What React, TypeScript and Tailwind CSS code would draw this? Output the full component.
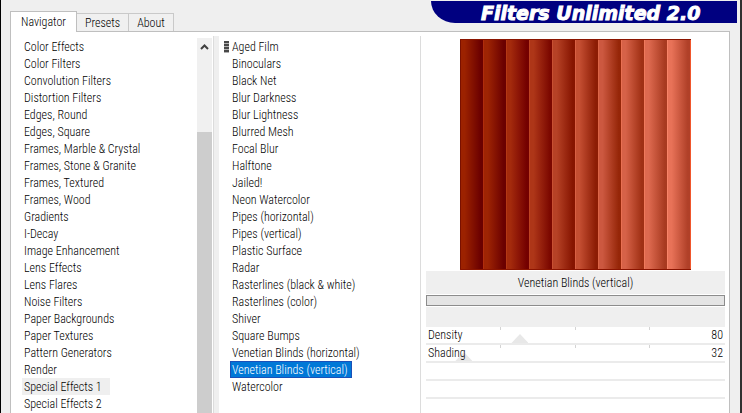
import { useState } from 'react'

const categories = [
  'Color Effects',
  'Color Filters',
  'Convolution Filters',
  'Distortion Filters',
  'Edges, Round',
  'Edges, Square',
  'Frames, Marble & Crystal',
  'Frames, Stone & Granite',
  'Frames, Textured',
  'Frames, Wood',
  'Gradients',
  'I-Decay',
  'Image Enhancement',
  'Lens Effects',
  'Lens Flares',
  'Noise Filters',
  'Paper Backgrounds',
  'Paper Textures',
  'Pattern Generators',
  'Render',
  'Special Effects 1',
  'Special Effects 2',
]

const filters = [
  'Aged Film',
  'Binoculars',
  'Black Net',
  'Blur Darkness',
  'Blur Lightness',
  'Blurred Mesh',
  'Focal Blur',
  'Halftone',
  'Jailed!',
  'Neon Watercolor',
  'Pipes (horizontal)',
  'Pipes (vertical)',
  'Plastic Surface',
  'Radar',
  'Rasterlines (black & white)',
  'Rasterlines (color)',
  'Shiver',
  'Square Bumps',
  'Venetian Blinds (horizontal)',
  'Venetian Blinds (vertical)',
  'Watercolor',
]

// edge highlight, left colour, right colour
const slats = [
  ['#7a1000', '#9c2200', '#6b0000'],
  ['#b02c0c', '#9e2404', '#6b0000'],
  ['#b43814', '#a42a0c', '#740000'],
  ['#be4422', '#ae3618', '#7c0800'],
  ['#c85032', '#b64226', '#861400'],
  ['#d86044', '#c44e32', '#8c1c04'],
  ['#dc6648', '#cc5840', '#962608'],
  ['#e87052', '#d66248', '#a03014'],
  ['#f07a5c', '#de6a50', '#a83a20'],
  ['#f88468', '#e87258', '#b04028'],
]

function FilmIcon() {
  return (
    <svg width="5" height="12" viewBox="0 0 5 12" aria-hidden="true">
      {[0, 3, 6, 9].map((y) => (
        <g key={y}>
          <rect y={y} width="5" height="2" fill="#484848" />
          <rect y={y + 2} width="5" height="1" fill="#b0b0b0" />
        </g>
      ))}
    </svg>
  )
}

function Preview() {
  return (
    <svg viewBox="0 0 231 231" className="mx-auto block w-[231px]" role="img" aria-label="Preview">
      <defs>
        {slats.map(([, from, to], i) => (
          <linearGradient key={i} id={`slat${i}`}>
            <stop offset="0" stopColor={from} />
            <stop offset="0.2" stopColor={from} />
            <stop offset="0.9" stopColor={to} />
          </linearGradient>
        ))}
      </defs>
      {slats.map(([edge], i) => (
        <g key={i}>
          <rect x={i * 23} width="23" height="231" fill={`url(#slat${i})`} />
          <rect x={i * 23} width="1" height="231" fill={edge} />
        </g>
      ))}
      <rect x="230" width="1" height="231" fill="#f0562c" />
      <rect width="231" height="1" fill="#8a1400" />
      <rect y="230" width="231" height="1" fill="#8a1400" />
    </svg>
  )
}

function Tab({ label, active, onClick }: { label: string; active: boolean; onClick: () => void }) {
  return (
    <button
      type="button"
      role="tab"
      aria-selected={active}
      onClick={onClick}
      className={
        active
          ? 'relative -mb-px h-[21px] border border-b-0 border-[#bfbfbf] bg-white px-2.5'
          : 'h-[18px] border border-b-0 border-l-0 border-[#c9c9c9] bg-[#f0f0f0] px-2 pt-px'
      }
    >
      {label}
    </button>
  )
}

function Param({ label, initial }: { label: string; initial: number }) {
  const [value, setValue] = useState(initial)
  const id = label.toLowerCase()

  return (
    <div className="grid h-[18px] border-b-2 border-[#ebebeb] *:[grid-area:1/1]">
      <div className="grid h-[3px] grid-cols-4" aria-hidden="true">
        <span className="border-r border-[#d4d4d4]" />
        <span className="border-r border-[#d4d4d4]" />
        <span className="border-r border-[#d4d4d4]" />
      </div>
      <input
        id={id}
        type="range"
        min={0}
        max={255}
        value={value}
        onChange={(e) => setValue(Number(e.target.value))}
        className="-mx-2 h-[9px] appearance-none self-end bg-transparent [&::-webkit-slider-thumb]:h-[9px] [&::-webkit-slider-thumb]:w-[17px] [&::-webkit-slider-thumb]:appearance-none [&::-webkit-slider-thumb]:bg-[#e8e8e8] [&::-webkit-slider-thumb]:[clip-path:polygon(50%_0,100%_100%,0_100%)]"
      />
      <div className="pointer-events-none relative flex justify-between px-0.5 leading-4">
        <label htmlFor={id}>{label}</label>
        <output htmlFor={id}>{value}</output>
      </div>
    </div>
  )
}

export default function App() {
  const [tab, setTab] = useState('Navigator')
  const [category, setCategory] = useState('Special Effects 1')
  const [filter, setFilter] = useState('Venetian Blinds (vertical)')

  return (
    <div className="flex h-screen flex-col overflow-hidden border-r-2 border-l border-r-[#303030] border-l-black bg-[#efefef] pr-[10px] pl-[9px] font-['Roboto_Condensed','Roboto',sans-serif] text-[12px] leading-4 font-[360] text-black">
      <header className="flex items-start justify-between">
        <div role="tablist" className="flex items-end self-end">
          {['Navigator', 'Presets', 'About'].map((name) => (
            <Tab key={name} label={name} active={tab === name} onClick={() => setTab(name)} />
          ))}
        </div>
        <div className="-mr-[7px] mt-px mb-2 h-[22px] w-[306px] rounded-bl-[24px_22px] bg-[#000080] pl-[50px] font-['DejaVu_Sans',sans-serif] text-[19px] leading-[24px] font-bold whitespace-nowrap text-white italic [-webkit-text-stroke:1px_white]">
          Filters Unlimited 2.0
        </div>
      </header>

      <main className="flex min-h-0 flex-1 border border-b-0 border-[#bfbfbf] bg-white pt-1">
        <ul className="w-[186px] shrink-0 pt-[2px] pl-[11px]">
          {categories.map((name) => (
            <li key={name} className="h-[17px]">
              <button
                type="button"
                onClick={() => setCategory(name)}
                className={
                  name === category
                    ? 'bg-[#efefef] pt-px pr-2 pl-0.5 whitespace-nowrap'
                    : 'pt-px pr-2 pl-0.5 whitespace-nowrap'
                }
              >
                {name}
              </button>
            </li>
          ))}
        </ul>
        <div className="mt-[2px] mr-px flex w-[15px] shrink-0 flex-col bg-[#f0f0f0]">
          <button type="button" aria-label="Scroll up" className="flex h-[17px] items-center justify-center">
            <svg width="9" height="6" viewBox="0 0 9 6" fill="none" stroke="#404040" strokeWidth="2">
              <path d="M1 5 4.5 1.5 8 5" />
            </svg>
          </button>
          <div className="mt-[77px] flex-1 bg-[#cdcdcd]" />
        </div>
        <div className="w-[6px] shrink-0 border-l border-[#dcdcdc] bg-[#efefef]" />
        <ul className="min-w-0 flex-1 border-r border-[#dcdcdc] pt-[2px] pl-[5px]">
          {filters.map((name, i) => (
            <li key={name} className="flex h-[17px]">
              <span className="flex w-[6px] shrink-0 items-center">{i === 0 && <FilmIcon />}</span>
              <button
                type="button"
                onClick={() => setFilter(name)}
                className={
                  name === filter
                    ? 'bg-[#0078d7] pt-px pr-1 pl-0.5 whitespace-nowrap text-white outline outline-1 -outline-offset-1 outline-[#1a50b8]'
                    : 'pt-px pr-1 pl-0.5 whitespace-nowrap'
                }
              >
                {name}
              </button>
            </li>
          ))}
        </ul>
        <section className="w-[308px] shrink-0 pt-[3px] pr-1 pl-[5px]">
          <Preview />
          <h2 className="mt-px h-[23px] bg-[#efefef] text-center leading-[24px] font-[360]">{filter}</h2>
          <div className="mt-px h-[11px] border border-[#8c8c8c] bg-[#e4e4e4]" />
          <div className="mt-px h-[20px] bg-[#efefef]" />
          <Param label="Density" initial={80} />
          <Param label="Shading" initial={32} />
          <div className="h-[18px] border-b-2 border-[#ebebeb]" />
          <div className="h-[18px] border-b-2 border-[#ebebeb]" />
        </section>
      </main>
    </div>
  )
}
